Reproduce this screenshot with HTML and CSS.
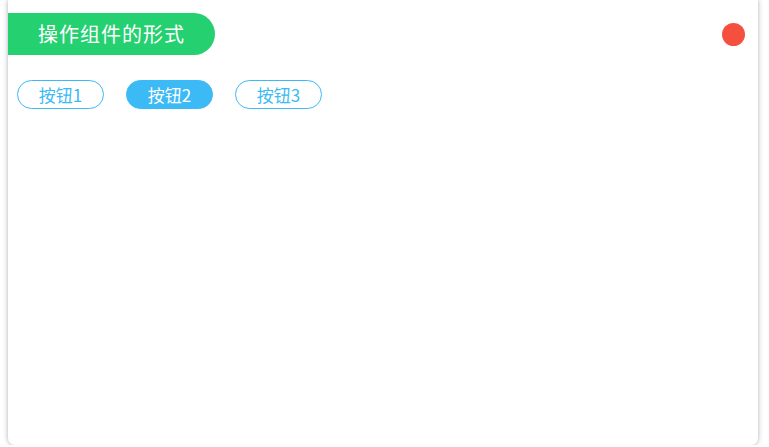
FILE: index.html
```html
<!DOCTYPE html>
<html lang="zh">
<head>
<meta charset="utf-8">
<link rel="stylesheet" href="styles.css">
</head>
<body>
<div class="card">
  <div class="head">
    <div class="title">操作组件的形式</div>
    <span class="dot"></span>
  </div>
  <div class="btns">
    <button class="btn">按钮1</button>
    <button class="btn active">按钮2</button>
    <button class="btn">按钮3</button>
  </div>
</div>
</body>
</html>
```
FILE: styles.css
```css
html, body {
  margin: 0;
  padding: 0;
  background: #ffffff;
  font-family: "Noto Sans CJK SC", "Noto Sans", sans-serif;
}
.card {
  margin: 0 11px 0 8px;
  height: 445px;
  background: #fff;
  border-radius: 0 0 7px 7px;
  box-shadow: 0 0 5px rgba(60, 70, 90, 0.45);
  box-sizing: border-box;
  padding-top: 13px;
}
.head {
  display: flex;
  align-items: center;
  justify-content: space-between;
  padding-right: 13px;
}
.title {
  width: 207px;
  height: 42px;
  box-sizing: border-box;
  background: #24d070;
  color: #fff;
  font-size: 20px;
  letter-spacing: 1px;
  line-height: 42px;
  padding-left: 30px;
  border-radius: 0 21px 21px 0;
}
.dot {
  width: 23px;
  height: 23px;
  border-radius: 50%;
  background: #f5503e;
}
.btns {
  display: flex;
  gap: 23px;
  padding: 25px 0 0 9px;
}
.btn {
  width: 87px;
  height: 29px;
  border: 1px solid #3bbaf5;
  background: #fff;
  color: #3bbaf5;
  border-radius: 15px;
  font-family: inherit;
  font-size: 17px;
  line-height: 27px;
  padding: 0;
}
.btn + .btn {
  margin-left: -1px;
}
.btn.active {
  background: #3bbaf5;
  color: #fff;
}
```
